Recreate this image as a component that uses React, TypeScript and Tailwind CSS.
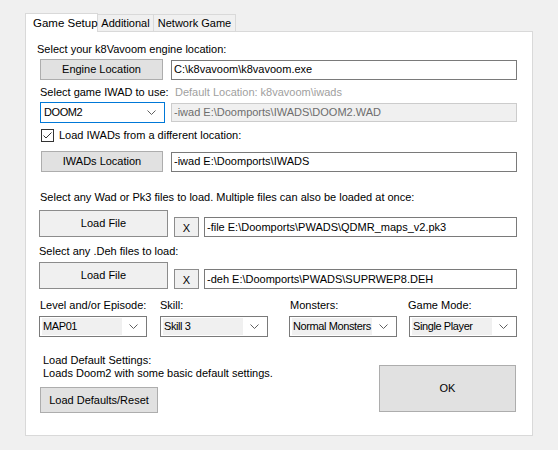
import React from 'react';

const font = { fontFamily: '"Liberation Sans", Arial, sans-serif' };

const Chevron = () => (
  <svg width="9" height="5" viewBox="0 0 9 5" className="shrink-0">
    <path d="M0.5 0.5 L4.5 4.5 L8.5 0.5" fill="none" stroke="#606060" strokeWidth="1" />
  </svg>
);

const Combo = ({ value, w, focused }: { value: string; w: string; focused?: boolean }) => (
  <div
    className={`${w} h-[21px] bg-white border flex items-center pl-[2px] pr-[8px] ${
      focused ? 'border-[#0078d7]' : 'border-[#7a7a7a]'
    }`}
  >
    <div
      className={`h-[17px] flex-1 min-w-0 flex items-center pl-[1px] whitespace-nowrap tracking-[-0.4px] ${
        focused ? '' : 'bg-[#f0f0f0] mr-[7px]'
      }`}
    >
      {value}
    </div>
    <Chevron />
  </div>
);

const TextBox = ({ value, w }: { value: string; w: string }) => (
  <div className={`${w} h-[20px] bg-white border border-[#7a7a7a] flex items-center pl-[2px] whitespace-nowrap overflow-hidden`}>
    {value}
  </div>
);

export default function App() {
  return (
    <div className="w-[558px] h-[450px] bg-[#f0f0f0] pt-[13px] pl-[25px] text-[11px] text-black leading-[13px]" style={font}>
      {/* tabs */}
      <div className="flex items-end h-[18px] relative z-10 whitespace-nowrap">
        <div className="w-[73px] h-[19px] -mb-px bg-white border border-b-0 border-[#d9d9d9] flex items-center pl-[7px] text-[11.5px]">
          Game Setup
        </div>
        <div className="w-[56px] h-[17px] bg-[#f0f0f0] border border-l-0 border-b-0 border-[#d9d9d9] flex items-center justify-center">
          Additional
        </div>
        <div className="w-[82px] h-[17px] bg-[#f0f0f0] border border-l-0 border-b-0 border-[#d9d9d9] flex items-center justify-center">
          Network Game
        </div>
      </div>

      {/* panel */}
      <div className="w-[508px] h-[405px] bg-white border border-[#d9d9d9] relative">
        <div className="mt-[11px] ml-[11px]">Select your k8Vavoom engine location:</div>

        <div className="flex items-center mt-[3px] ml-[14px] gap-[8px]">
          <div className="w-[123px] h-[21px] bg-[#e1e1e1] border border-[#adadad] flex items-center justify-center">
            Engine Location
          </div>
          <TextBox value="C:\k8vavoom\k8vavoom.exe" w="w-[346px]" />
        </div>

        <div className="flex mt-[6px] ml-[14px]">
          <div className="w-[135px]">Select game IWAD to use:</div>
          <div className="text-[#a0a0a0]">Default Location: k8vavoom\iwads</div>
        </div>

        <div className="flex items-center mt-[3px] ml-[14px] gap-[6px]">
          <Combo value="DOOM2" w="w-[125px]" focused />
          <div className="w-[346px] h-[19px] bg-[#f0f0f0] border border-[#cccccc] flex items-center pl-[2px] text-[#6d6d6d]">
            -iwad E:\Doomports\IWADS\DOOM2.WAD
          </div>
        </div>

        <div className="flex items-center mt-[6px] ml-[15px]">
          <div className="w-[13px] h-[13px] border border-[#333333] bg-white flex items-center justify-center">
            <svg width="11" height="11" viewBox="0 0 11 11">
              <path d="M1.5 5.5 L4 8 L9.5 2.5" fill="none" stroke="#333333" strokeWidth="1" />
            </svg>
          </div>
          <div className="ml-[5px]">Load IWADs from a different location:</div>
        </div>

        <div className="flex items-center mt-[9px] ml-[15px] gap-[8px]">
          <div className="w-[122px] h-[21px] bg-[#e1e1e1] border border-[#adadad] flex items-center justify-center">
            IWADs Location
          </div>
          <TextBox value="-iwad E:\Doomports\IWADS" w="w-[346px]" />
        </div>

        <div className="mt-[19px] ml-[14px]">
          Select any Wad or Pk3 files to load. Multiple files can also be loaded at once:
        </div>

        <div className="flex items-end mt-[6px] ml-[13px]">
          <div className="w-[129px] h-[27px] bg-[#f0f0f0] border border-[#8c8c8c] flex items-center justify-center">
            Load File
          </div>
          <div className="w-[25px] h-[20px] ml-[6px] bg-[#f0f0f0] border border-[#8c8c8c] flex items-center justify-center pt-[2px]">
            X
          </div>
          <div className="ml-[5px]">
            <TextBox value="-file E:\Doomports\PWADS\QDMR_maps_v2.pk3" w="w-[313px]" />
          </div>
        </div>

        <div className="mt-[8px] ml-[13px]">Select any .Deh files to load:</div>

        <div className="flex items-end mt-[4px] ml-[13px]">
          <div className="w-[129px] h-[27px] bg-[#f0f0f0] border border-[#8c8c8c] flex items-center justify-center">
            Load File
          </div>
          <div className="w-[25px] h-[20px] ml-[6px] bg-[#f0f0f0] border border-[#8c8c8c] flex items-center justify-center pt-[2px]">
            X
          </div>
          <div className="ml-[5px]">
            <TextBox value="-deh E:\Doomports\PWADS\SUPRWEP8.DEH" w="w-[313px]" />
          </div>
        </div>

        <div className="flex mt-[10px] ml-[13px]">
          <div className="w-[121px] pl-[1px]">Level and/or Episode:</div>
          <div className="w-[129px]">Skill:</div>
          <div className="w-[119px] pl-[1px]">Monsters:</div>
          <div>Game Mode:</div>
        </div>

        <div className="flex mt-[4px] ml-[13px]">
          <Combo value="MAP01" w="w-[108px]" />
          <div className="ml-[13px]"><Combo value="Skill 3" w="w-[108px]" /></div>
          <div className="ml-[21px]"><Combo value="Normal Monsters" w="w-[108px]" /></div>
          <div className="ml-[12px]"><Combo value="Single Player" w="w-[108px]" /></div>
        </div>

        <div className="flex mt-[17px] ml-[14px]">
          <div className="flex flex-col">
            <div className="ml-[3px]">Load Default Settings:</div>
            <div className="ml-[3px]">Loads Doom2 with some basic default settings.</div>
            <div className="w-[118px] h-[26px] mt-[7px] bg-[#e1e1e1] border border-[#adadad] flex items-center justify-center">
              Load Defaults/Reset
            </div>
          </div>
          <div className="ml-auto mt-[11px] mr-[16px] w-[137px] h-[47px] bg-[#e1e1e1] border border-[#adadad] flex items-center justify-center">
            OK
          </div>
        </div>
      </div>
    </div>
  );
}
